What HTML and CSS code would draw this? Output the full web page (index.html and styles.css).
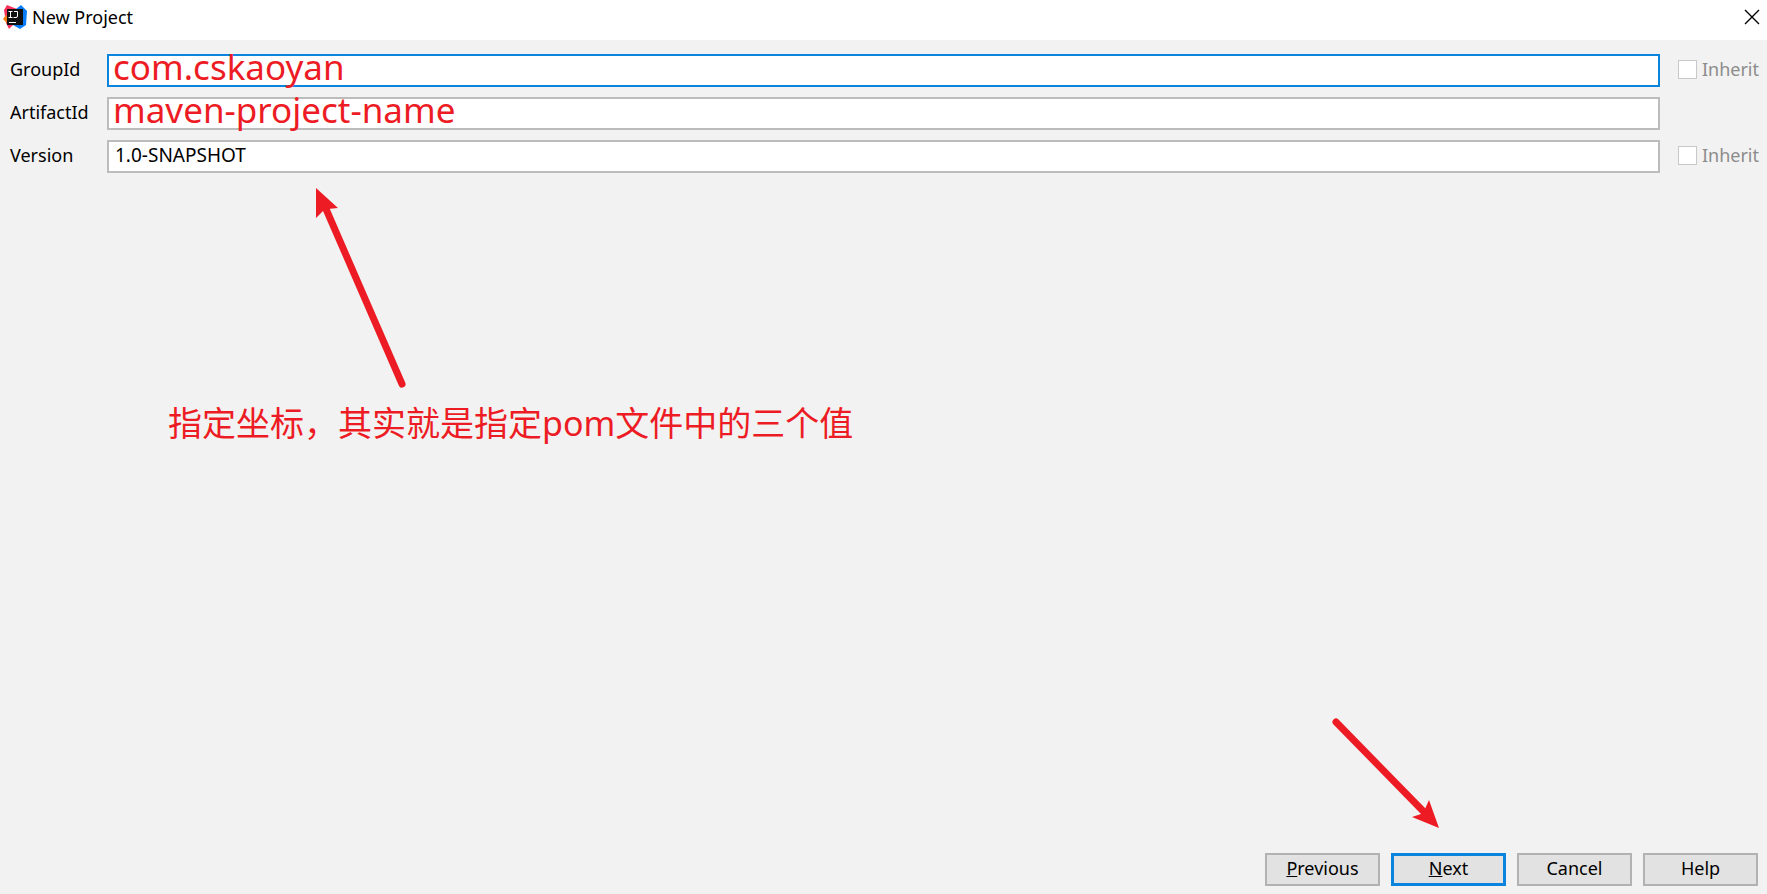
FILE: index.html
```
<!DOCTYPE html>
<html lang="zh-CN">
<head>
  <meta charset="UTF-8" />
  <meta name="viewport" content="width=device-width, initial-scale=1.0"/>
  <title>New Project</title>
  <link rel="stylesheet" href="styles.css">
</head>
<body>

  <header class="titlebar">
    <svg class="logo" viewBox="0 0 24 24" aria-hidden="true">
      <path d="M4 0L14 4L10 20L6 24L3 18L1 5Z" fill="#fe315d"/>
      <path d="M0 14L3 10L6 14L5 19Z" fill="#f97a12"/>
      <path d="M13 4L18 0L24 6L23 20L17 24L10 20Z" fill="#087cfa"/>
      <rect x="4" y="4" width="16" height="16" fill="#111"/>
      <path d="M5.500 6.500H9.500M7.500 6.500V12.500M5.500 12.500H9.500M11 6.500H14.500V11Q14.500 12.500 13 12.500H10.500" fill="none" stroke="#fff" stroke-width="1"/>
      <path d="M6 17.500H13" stroke="#fff" stroke-width="1"/>
    </svg>
    <h1>New Project</h1>
    <button class="close" type="button" aria-label="Close">
      <svg viewBox="0 0 16 16"><path d="M1 1L15 15M15 1L1 15" fill="none" stroke="#000" stroke-width="1.4"/></svg>
    </button>
  </header>

  <main>
    <form class="coords" id="coords">
      <div class="row">
        <label for="group">GroupId</label>
        <div class="field">
          <input class="text active" type="text" id="group">
          <span class="note">com.cskaoyan</span>
        </div>
        <label class="inherit"><input type="checkbox" disabled>Inherit</label>
      </div>
      <div class="row">
        <label for="artifact">ArtifactId</label>
        <div class="field">
          <input class="text" type="text" id="artifact">
          <span class="note">maven-project-name</span>
        </div>
      </div>
      <div class="row">
        <label for="version">Version</label>
        <div class="field">
          <input class="text" type="text" id="version" value="1.0-SNAPSHOT">
        </div>
        <label class="inherit"><input type="checkbox" disabled>Inherit</label>
      </div>
    </form>

    <figure class="hint">
      <svg class="arrow-up" viewBox="0 0 96 204" aria-hidden="true">
        <path d="M10 21L86 196" stroke="#ed1c24" stroke-width="7" stroke-linecap="round"/>
        <path d="M0 0L22 20L12 21L7 23L0 30Z" fill="#ed1c24"/>
      </svg>
      <figcaption>指定坐标，其实就是指定pom文件中的三个值</figcaption>
    </figure>
  </main>

  <footer>
    <svg class="arrow-down" viewBox="0 0 108 112" aria-hidden="true">
      <path d="M4 4L91 93" stroke="#ed1c24" stroke-width="7" stroke-linecap="round"/>
      <path d="M107 110L80 99L89 96L93 91L97 82Z" fill="#ed1c24"/>
    </svg>
    <div class="buttons">
      <button type="button"><u>P</u>revious</button>
      <button type="submit" form="coords" class="default"><u>N</u>ext</button>
      <button type="button">Cancel</button>
      <button type="button">Help</button>
    </div>
  </footer>

</body>
</html>
```
FILE: styles.css
```
:root {
  --window: #f2f2f2;
  --line: #bcbcbc;
  --accent: #0a84dc;
  --marker: #ed1c24;
}

* {
  box-sizing: border-box;
}

body {
  display: flex;
  flex-direction: column;
  min-height: 100vh;
  margin: 0;
  background-color: var(--window);
  color: #000;
  font: 18px/24px "Noto Sans", "Noto Sans CJK SC", sans-serif;
}

.titlebar {
  display: flex;
  align-items: center;
  height: 40px;
  padding: 0 7px 6px 3px;
  background-color: #fff;
}

.logo {
  width: 24px;
  height: 24px;
  margin-right: 5px;
}

h1 {
  flex: 1;
  margin: 0;
  font-size: 18px;
  font-weight: normal;
}

.close {
  display: flex;
  padding: 0;
  border: 0;
  background: none;
}

.close svg {
  width: 16px;
  height: 16px;
}

main {
  flex: 1;
  padding: 14px 8px 0 10px;
}

.coords {
  display: grid;
  gap: 10px;
}

.row {
  display: grid;
  grid-template-columns: 97px 1fr 99px;
  align-items: center;
}

.row label {
  padding-bottom: 3px;
}

.field {
  position: relative;
}

.text {
  display: block;
  width: 100%;
  height: 33px;
  padding: 0 6px 3px;
  border: 2px solid var(--line);
  background-color: #fff;
  font: inherit;
  font-size: 19px;
  outline: none;
}

.text.active {
  border-color: var(--accent);
}

/* marker text written over the fields */
.note {
  position: absolute;
  left: 6px;
  top: -7px;
  color: var(--marker);
  font-size: 35px;
  line-height: 40px;
  pointer-events: none;
}

.inherit {
  display: flex;
  align-items: center;
  justify-content: flex-end;
  gap: 5px;
  color: #8c8c8c;
}

.inherit input {
  appearance: none;
  width: 19px;
  height: 19px;
  margin: 0;
  border: 1px solid #c8c8c8;
  background-color: #fff;
}

.hint {
  margin: 15px 0 0 158px;
  color: var(--marker);
  font-size: 34px;
  line-height: 48px;
}

.arrow-up {
  display: block;
  width: 96px;
  height: 204px;
  margin: 0 0 7px 148px;
}

footer {
  display: flex;
  flex-direction: column;
  align-items: flex-end;
  gap: 23px;
  padding: 0 9px 8px;
}

.arrow-down {
  width: 108px;
  height: 112px;
  margin-right: 318px;
}

.buttons {
  display: flex;
  gap: 11px;
}

.buttons button {
  width: 115px;
  height: 33px;
  padding: 0 0 3px;
  border: 2px solid #b2b2b2;
  background-color: #e2e2e2;
  color: #000;
  font: inherit;
}

.buttons .default {
  border: 3px solid var(--accent);
}
```
